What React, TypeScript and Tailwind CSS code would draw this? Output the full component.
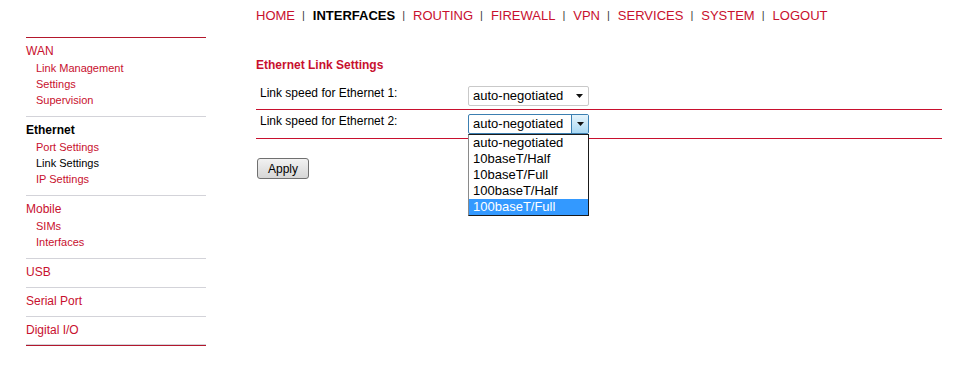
import type { ReactNode } from "react";

const NAV = ["HOME", "INTERFACES", "ROUTING", "FIREWALL", "VPN", "SERVICES", "SYSTEM", "LOGOUT"];
const ACTIVE_NAV = "INTERFACES";

type SideSection = {
  title: string;
  active?: boolean;
  items: { label: string; active?: boolean }[];
};

const SIDEBAR: SideSection[] = [
  { title: "WAN", items: [{ label: "Link Management" }, { label: "Settings" }, { label: "Supervision" }] },
  {
    title: "Ethernet",
    active: true,
    items: [{ label: "Port Settings" }, { label: "Link Settings", active: true }, { label: "IP Settings" }],
  },
  { title: "Mobile", items: [{ label: "SIMs" }, { label: "Interfaces" }] },
  { title: "USB", items: [] },
  { title: "Serial Port", items: [] },
  { title: "Digital I/O", items: [] },
];

const SPEEDS = ["auto-negotiated", "10baseT/Half", "10baseT/Full", "100baseT/Half", "100baseT/Full"];

function TopNav() {
  return (
    <nav className="flex h-[30px] items-center pl-[256px] pt-[1px] text-[13px] leading-[15px]">
      {NAV.map((item, index) => (
        <span key={item} className="flex items-center">
          {index > 0 ? <span className="ml-[7px] mr-[8px] text-[11px] text-[#3a3a3a]">|</span> : null}
          <span className={item === ACTIVE_NAV ? "font-bold text-black" : "text-[#c8102e]"}>{item}</span>
        </span>
      ))}
    </nav>
  );
}

function Sidebar() {
  return (
    <aside className="ml-[26px] mt-[7px] w-[180px] self-start border-y border-y-[#b3172c]">
      {SIDEBAR.map((section, index) => {
        const last = index === SIDEBAR.length - 1;
        const pb = section.items.length > 0 ? "pb-[8px]" : last ? "pb-[5px]" : "pb-[6px]";
        return (
          <div key={section.title} className={`border-b border-b-[#d3d3d9] pt-[4px] ${pb}`}>
            <div className={section.active ? "text-[12px] font-bold leading-[18px] text-black" : "text-[12px] leading-[18px] text-[#c8102e]"}>
              {section.title}
            </div>
            {section.items.map((item) => (
              <div
                key={item.label}
                className={item.active ? "pl-[10px] text-[11px] leading-[16px] text-black" : "pl-[10px] text-[11px] leading-[16px] text-[#c8102e]"}
              >
                {item.label}
              </div>
            ))}
          </div>
        );
      })}
    </aside>
  );
}

function Caret() {
  return (
    <svg width="7" height="4" viewBox="0 0 7 4" aria-hidden>
      <path d="M0 0h7L3.5 4z" fill="#111" />
    </svg>
  );
}

function FakeSelect({ open }: { open?: boolean }) {
  if (!open) {
    return (
      <div className="mt-[1px] flex h-[20px] w-[121px] items-center rounded-[2px] border border-[#c9c9c9] bg-white pl-[4px] text-[13px] leading-[16px] text-black">
        <span className="flex-1">{SPEEDS[0]}</span>
        <span className="flex w-[17px] justify-center">
          <Caret />
        </span>
      </div>
    );
  }
  return (
    <div className="relative mt-[1px]">
      <div className="flex h-[20px] w-[121px] items-center rounded-[2px] border border-[#3c7fb1] bg-white pl-[4px] text-[13px] leading-[16px] text-black">
        <span className="flex-1">{SPEEDS[0]}</span>
        <span className="flex h-full w-[17px] items-center justify-center border-l border-l-[#3c7fb1] bg-gradient-to-b from-[#e5f4fc] to-[#a9d9f4]">
          <Caret />
        </span>
      </div>
      <ul className="absolute left-0 top-full z-10 w-[121px] border border-[#1a1a1a] border-l-[#8a8a8a] bg-white">
        {SPEEDS.map((speed, index) => (
          <li
            key={speed}
            className={
              index === SPEEDS.length - 1
                ? "h-[16px] bg-[#3399ff] pl-[4px] text-[13px] leading-[16px] text-white"
                : "h-[16px] pl-[4px] text-[13px] leading-[16px] text-black"
            }
          >
            {speed}
          </li>
        ))}
      </ul>
    </div>
  );
}

function SettingRow({ label, height, children }: { label: string; height: string; children: ReactNode }) {
  return (
    <div className={`flex items-start border-b border-b-[#c8102e] pt-[3px] ${height}`}>
      <div className="w-[212px] pl-[4px] text-[12px] leading-[16px] text-black">{label}</div>
      {children}
    </div>
  );
}

export default function App() {
  return (
    <div className="h-[371px] w-[968px] overflow-hidden bg-white font-['Liberation_Sans',Arial,sans-serif]">
      <TopNav />
      <div className="flex">
        <Sidebar />
        <main className="ml-[50px] w-[686px]">
          <h2 className="mt-[27px] mb-[9px] text-[12px] font-bold leading-[16px] text-[#c8102e]">Ethernet Link Settings</h2>
          <SettingRow label="Link speed for Ethernet 1:" height="h-[28px]">
            <FakeSelect />
          </SettingRow>
          <SettingRow label="Link speed for Ethernet 2:" height="h-[29px]">
            <FakeSelect open />
          </SettingRow>
          <button
            type="button"
            className="ml-[1px] mt-[19px] h-[21px] w-[52px] rounded-[3px] border border-[#707070] bg-gradient-to-b from-[#f2f2f2] to-[#d6d6d6] text-[12px] leading-[16px] text-black"
          >
            Apply
          </button>
        </main>
      </div>
    </div>
  );
}
